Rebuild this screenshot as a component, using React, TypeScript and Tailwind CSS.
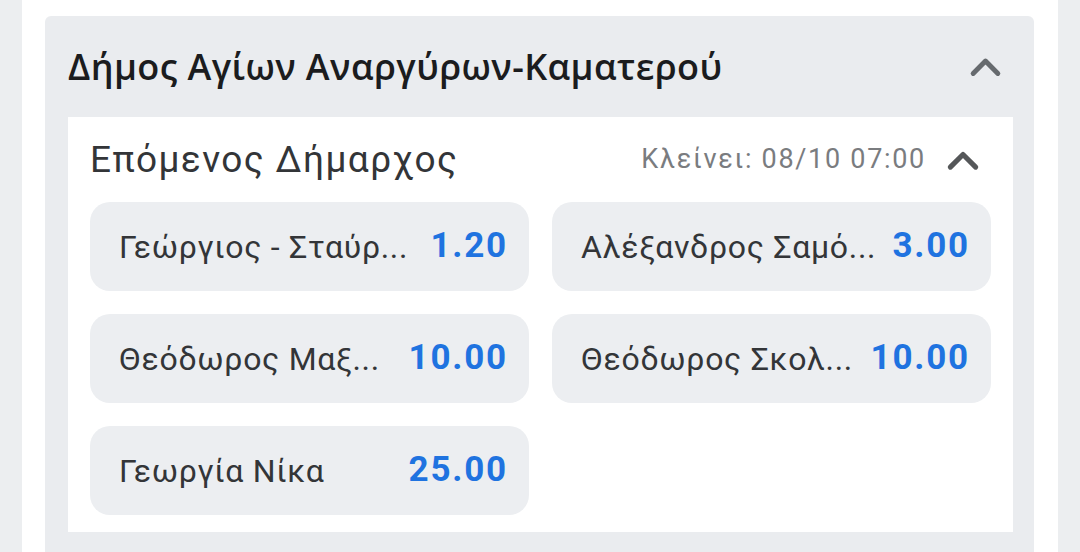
import React from "react";

const Chevron = ({ className }: { className?: string }) => (
  <svg viewBox="0 0 24 24" className={className} fill="none" stroke="currentColor" strokeWidth={3.2} strokeLinecap="round" strokeLinejoin="round">
    <path d="M4 16.5 L12 8.5 L20 16.5" />
  </svg>
);

const odds = [
  { name: "Γεώργιος - Σταύρ...", v: "1.20" },
  { name: "Αλέξανδρος Σαμό...", v: "3.00" },
  { name: "Θεόδωρος Μαξ...", v: "10.00" },
  { name: "Θεόδωρος Σκολ...", v: "10.00" },
  { name: "Γεωργία Νίκα", v: "25.00" },
];

export default function App() {
  return (
    <div className="w-[1080px] h-[552px] bg-[#eceef0] flex px-[22px] overflow-hidden" style={{ fontFamily: "Roboto, 'Noto Sans', sans-serif" }}>
      <div className="flex-1 bg-white pl-[23px] pr-[24px] pt-4">
        <div className="bg-[#eaecef] rounded-t-[6px] pl-[23px] pr-[21px] pb-5">
          <div className="h-[101px] flex items-center justify-between pr-[9px]">
            <div className="text-[36px] font-semibold text-[#1b1c1e] tracking-[0.4px]" style={{ fontFamily: "'Open Sans', Roboto, sans-serif" }}>
              Δήμος Αγίων Αναργύρων-Καματερού
            </div>
            <Chevron className="w-[37px] h-[37px] text-[#666a6e]" />
          </div>
          <div className="bg-white px-[22px] pb-[17px]">
            <div className="h-[85px] flex items-center justify-between pr-[9px]">
              <div className="text-[37px] tracking-[1.4px] text-[#333538]">Επόμενος Δήμαρχος</div>
              <div className="flex items-center gap-[18px]">
                <span className="text-[27px] tracking-[1.7px] text-[#7a7c7f]">Κλείνει: 08/10 07:00</span>
                <Chevron className="w-[38px] h-[38px] text-[#555759]" />
              </div>
            </div>
            <div className="grid grid-cols-2 gap-x-[23px] gap-y-[23px]">
              {odds.map((o, i) => (
                <div key={i} className="h-[89px] rounded-[20px] bg-[#eceef1] flex items-center justify-between pl-[29px] pr-[21px]">
                  <span className="text-[32px] tracking-[0.7px] text-[#333538]">{o.name}</span>
                  <span className="text-[35px] tracking-[1.8px] font-bold text-[#1f73e0]">{o.v}</span>
                </div>
              ))}
            </div>
          </div>
        </div>
      </div>
    </div>
  );
}
